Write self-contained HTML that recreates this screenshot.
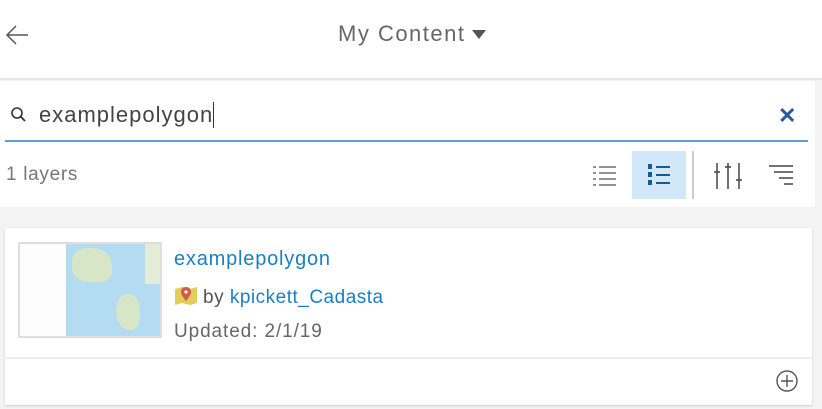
<html><head><style>
body{margin:0;width:822px;height:409px;background:#f3f3f3;font-family:"Liberation Sans",sans-serif;position:relative;overflow:hidden}
.a{position:absolute}
</style></head><body>
<div class="a" style="left:0;top:0;width:822px;height:78px;background:#fff;border-bottom:2px solid #e6e6e6"></div>
<svg class="a" style="left:4px;top:24px" width="26" height="22"><path d="M24 11H3M12 2L3 11l9 9" stroke="#555" stroke-width="1.5" fill="none"/></svg>
<div class="a" style="left:338px;top:21px;font-size:22px;color:#666;letter-spacing:1.5px">My Content</div>
<svg class="a" style="left:472px;top:30px" width="14" height="10"><path d="M0 0h14L7 9z" fill="#555"/></svg>
<div class="a" style="left:0;top:81px;width:815px;height:126px;background:#fff"></div>
<svg class="a" style="left:10px;top:106px" width="18" height="18"><circle cx="7" cy="7" r="5" stroke="#333" stroke-width="1.6" fill="none"/><path d="M10.5 10.5L15 15" stroke="#333" stroke-width="1.8"/></svg>
<div class="a" style="left:39px;top:102px;font-size:22px;color:#444;letter-spacing:1px">examplepolygon<span style="display:inline-block;width:1px;height:26px;background:#333;vertical-align:-6px"></span></div>
<div class="a" style="left:778px;top:103px;font-size:22px;font-weight:bold;color:#2b5a9a">✕</div>
<div class="a" style="left:5px;top:140px;width:803px;height:2px;background:#5b9fd3"></div>
<div class="a" style="left:6px;top:164px;font-size:19px;color:#777;letter-spacing:0.7px">1 layers</div>
<svg class="a" style="left:593px;top:165px" width="24" height="22"><g stroke="#555" stroke-width="1.3"><path d="M0 2h3M6 2h17M0 8h3M6 8h17M0 14h3M6 14h17M0 20h3M6 20h17"/></g></svg>
<div class="a" style="left:632px;top:151px;width:54px;height:48px;background:#d2e8f8"></div>
<svg class="a" style="left:648px;top:163px" width="24" height="24"><g fill="#135b94"><rect x="0" y="1" width="4" height="5"/><rect x="0" y="9" width="4" height="5"/><rect x="0" y="17" width="4" height="5"/><rect x="8" y="3" width="14" height="2"/><rect x="8" y="11" width="14" height="2"/><rect x="8" y="19" width="14" height="2"/></g></svg>
<div class="a" style="left:692px;top:151px;width:2px;height:48px;background:#ccc"></div>
<svg class="a" style="left:714px;top:162px" width="28" height="28"><g stroke="#444" stroke-width="1.5" fill="none"><path d="M3 1v26M14 1v26M25 1v26M0 10h6M11 5h6M22 18h6"/></g></svg>
<svg class="a" style="left:768px;top:164px" width="26" height="24"><g stroke="#444" stroke-width="1.5"><path d="M1 2h24M6 8h19M11 14h14M16 20h9"/></g></svg>
<div class="a" style="left:5px;top:228px;width:807px;height:177px;background:#fff;box-shadow:0 1px 2px #ccc"></div>
<div class="a" style="left:18px;top:242px;width:140px;height:92px;border:2px solid #ddd;background:#fdfdfd;overflow:hidden">
<div class="a" style="left:46px;top:0;width:94px;height:92px;background:#b3dcf3"></div>
<div class="a" style="left:52px;top:4px;width:40px;height:34px;background:#d6e6c6;border-radius:40% 50% 30% 40%"></div>
<div class="a" style="left:96px;top:50px;width:24px;height:36px;background:#d6e6c6;border-radius:50% 50% 40% 60%"></div>
<div class="a" style="left:125px;top:0;width:15px;height:40px;background:#e2ecd6"></div>
</div>
<div class="a" style="left:174px;top:248px;font-size:20px;color:#1a7fc4;letter-spacing:0.8px">examplepolygon</div>
<svg class="a" style="left:174px;top:285px" width="24" height="22"><path d="M1 4l7-2 8 2 7-2v16l-7 2-8-2-7 2z" fill="#e4cc58"/><path d="M12 2c-4 0-5 3-5 5 0 3 5 9 5 9s5-6 5-9c0-2-1-5-5-5z" fill="#d25a4a"/><circle cx="12" cy="7" r="1.6" fill="#fff"/></svg>
<div class="a" style="left:203px;top:287px;font-size:19px;color:#555;letter-spacing:0.5px">by <span style="color:#1a7fc4">kpickett_Cadasta</span></div>
<div class="a" style="left:174px;top:321px;font-size:19px;color:#666;letter-spacing:0.9px">Updated: 2/1/19</div>
<div class="a" style="left:6px;top:357px;width:806px;height:2px;background:#eee"></div>
<svg class="a" style="left:775px;top:369px" width="24" height="24"><circle cx="12" cy="12" r="10" stroke="#555" stroke-width="1.4" fill="none"/><path d="M12 6v12M6 12h12" stroke="#555" stroke-width="1.4"/></svg>
</body></html>
